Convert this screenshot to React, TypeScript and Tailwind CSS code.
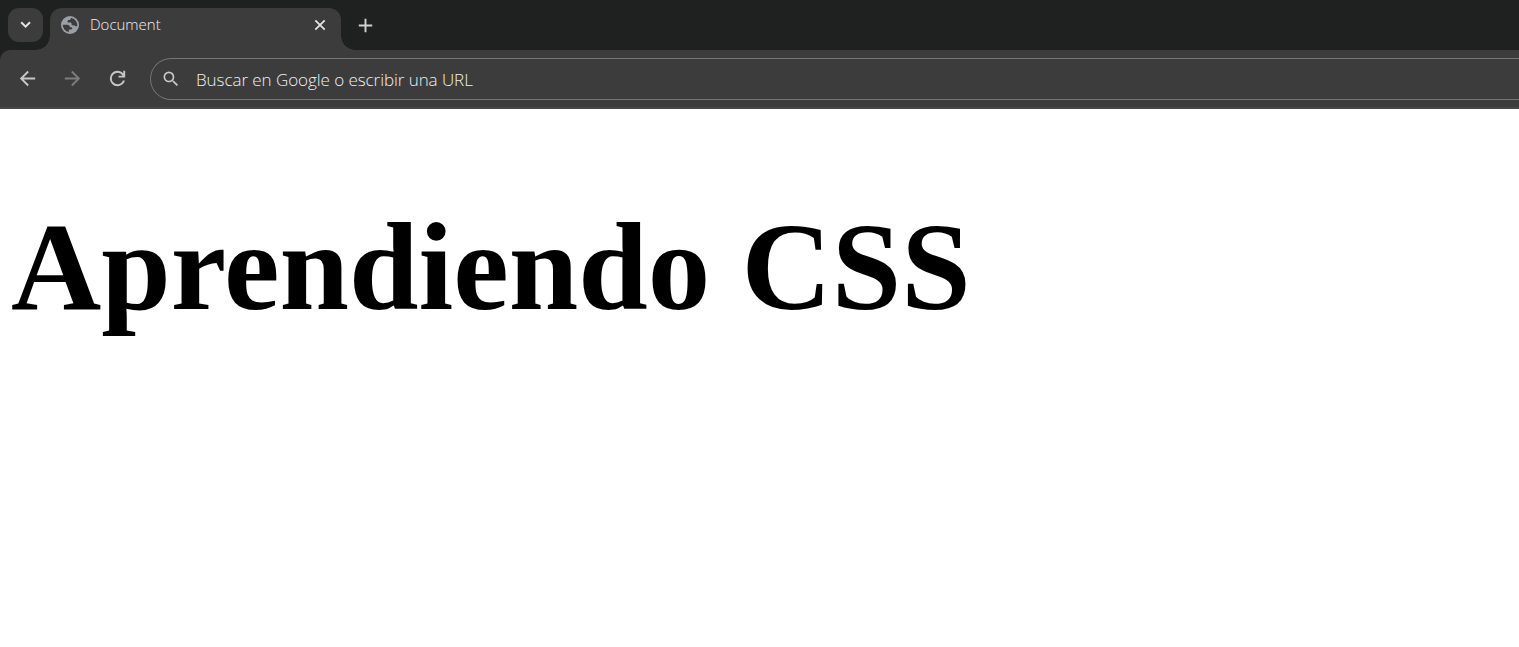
import React from "react";
import { MdAdd, MdArrowBack, MdArrowForward, MdSearch } from "react-icons/md";

function GlobeIcon() {
  return (
    <svg viewBox="0 0 18 18" className="size-[18px] shrink-0" aria-hidden="true">
      <circle cx="9" cy="9" r="9" fill="#9aa0a6" />
      <path
        d="M10.4 1.9C9.4 2.4 9 3.4 9 4.1H7.7C6.9 4.1 6.6 4.8 6.6 5.4V6.6H9.4C10.3 6.6 10.6 7.3 10.6 8.2C10.6 9 11.2 9.4 12 9.4H13.6C14.1 9.4 14.2 10.3 14.8 10.3H16.1A7.3 7.3 0 0 0 10.4 1.9Z"
        fill="#3c3c3c"
      />
      <path
        d="M1.8 8.7H6.2C7.8 8.7 9 9.7 9 11.2H10.4C11.3 11.2 11.5 12 11.2 12.8C10.9 13.5 10 13.5 8.9 13.5C8.1 13.5 7.8 14 7.8 14.6V16.1A7.3 7.3 0 0 1 1.8 8.7Z"
        fill="#3c3c3c"
      />
    </svg>
  );
}

function CloseIcon() {
  return (
    <svg viewBox="0 0 12 12" className="mr-[3px] size-3 shrink-0" fill="none" stroke="#e3e3e3" strokeWidth="1.8" aria-hidden="true">
      <path d="m1.3 1.3 9.4 9.4M10.7 1.3 1.3 10.7" />
    </svg>
  );
}

function ReloadIcon() {
  return (
    <svg viewBox="0 -960 960 960" className="size-[23px] shrink-0" fill="#c7c7c7" aria-hidden="true">
      <path d="M480-160q-134 0-227-93t-93-227q0-134 93-227t227-93q69 0 132 28.5T720-690v-110h80v280H520v-80h168q-32-56-87.5-88T480-720q-100 0-170 70t-70 170q0 100 70 170t170 70q77 0 139-44t87-116h84q-28 106-114 173t-196 67Z" />
    </svg>
  );
}

function TabStrip() {
  return (
    <div className="flex h-[50px] pl-2 pt-2">
      <button className="mr-[7px] flex h-[34px] w-[35px] shrink-0 items-center justify-center rounded-[11px] bg-[#3c3c3c]" aria-label="Buscar pestañas">
        <svg viewBox="0 0 12 8" className="h-2 w-3" fill="none" stroke="#e3e3e3" strokeWidth="2" aria-hidden="true">
          <path d="m1.2 1.3 4.4 4.4 4.4-4.4" />
        </svg>
      </button>
      <div className="relative flex h-[42px] w-[291px] shrink-0 rounded-t-[12px] bg-[#3c3c3c] pl-[11px] pr-3">
        <span className="absolute -left-3.5 bottom-0 size-3.5 bg-[radial-gradient(circle_at_0_0,transparent_13.5px,#3c3c3c_14px)]" />
        <span className="absolute -right-3.5 bottom-0 size-3.5 bg-[radial-gradient(circle_at_100%_0,transparent_13.5px,#3c3c3c_14px)]" />
        <div className="flex h-[34px] flex-1 items-center">
          <GlobeIcon />
          <span className="ml-[11px] flex-1 pb-0.5 font-['Open_Sans','Noto_Sans',sans-serif] text-[15px] font-light leading-5 text-[#f0f0f0]">Document</span>
          <CloseIcon />
        </div>
      </div>
      <div className="ml-[13px] flex h-[34px] items-center">
        <MdAdd className="size-[23px] text-[#d0d0d0]" />
      </div>
    </div>
  );
}

function Toolbar() {
  return (
    <div className="flex h-[59px] rounded-tl-[10px] border-b-2 border-[#474747] bg-[#3c3c3c] pl-4 pt-2">
      <div className="flex h-[41px] w-[134px] shrink-0 items-center gap-[22px]">
        <MdArrowBack className="size-[23px] text-[#c7c7c7]" />
        <MdArrowForward className="size-[23px] text-[#7d7d7d]" />
        <ReloadIcon />
      </div>
      <div className="flex h-[42px] flex-1 items-center rounded-l-full border border-r-0 border-[#757575] pl-2.5">
        <MdSearch className="size-5 text-[#c7c7c7]" />
        <span className="ml-[15px] pt-0.5 font-['Open_Sans','Noto_Sans',sans-serif] text-[17px] font-light leading-6 tracking-[-0.06px] text-[#f0f0f0]">
          Buscar en Google o escribir una URL
        </span>
      </div>
    </div>
  );
}

export default function App() {
  return (
    <div className="flex h-[647px] flex-col overflow-hidden bg-white">
      <header className="bg-[#1f2020]">
        <TabStrip />
        <Toolbar />
      </header>
      <main className="flex-1 px-[11px] pt-[86px]">
        <h1 className="font-['Liberation_Serif',serif] text-[125px] font-bold leading-[144px] text-black">
          Aprendiendo CSS
        </h1>
      </main>
    </div>
  );
}
